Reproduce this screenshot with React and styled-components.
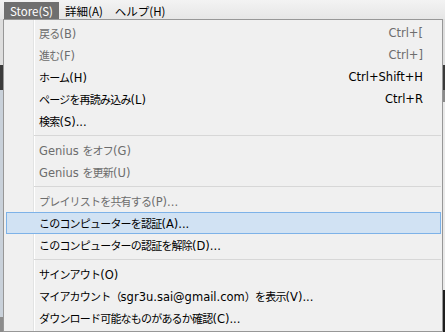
import React from "react";
import styled, { createGlobalStyle } from "styled-components";

const GlobalStyle = createGlobalStyle`
  html, body {
    margin: 0;
    padding: 0;
    overflow: hidden;
    background: #ececec;
  }
  body {
    font-family: "Noto Sans CJK JP", "Noto Sans", sans-serif;
  }
`;

const menuItems = [
  { label: "戻る(B)", shortcut: "Ctrl+[", disabled: true },
  { label: "進む(F)", shortcut: "Ctrl+]", disabled: true },
  { label: "ホーム(H)", shortcut: "Ctrl+Shift+H" },
  { label: "ページを再読み込み(L)", shortcut: "Ctrl+R" },
  { label: "検索(S)..." },
  { separator: true },
  { label: "Genius をオフ(G)", disabled: true },
  { label: "Genius を更新(U)", disabled: true },
  { separator: true },
  { label: "プレイリストを共有する(P)...", disabled: true },
  { label: "このコンピューターを認証(A)...", highlight: true },
  { label: "このコンピューターの認証を解除(D)..." },
  { separator: true },
  { label: "サインアウト(O)" },
  { label: "マイアカウント（sgr3u.sai@gmail.com）を表示(V)..." },
  { label: "ダウンロード可能なものがあるか確認(C)..." },
];

// latin runs get a wider face, kana/kanji a narrower one (like Meiryo UI)
function MixedText({ text }) {
  return text
    .split(/([\x20-\x7E]+)/)
    .filter(Boolean)
    .map((run, i) =>
      /^[\x20-\x7E]+$/.test(run) ? (
        <Latin key={i}>{run}</Latin>
      ) : (
        <Kana key={i}>{run}</Kana>
      )
    );
}

function App() {
  return (
    <Screen>
      <GlobalStyle />
      <MenuBar>
        <MenuTitle $active>Store(S)</MenuTitle>
        <MenuTitle>詳細(A)</MenuTitle>
        <MenuTitle>ヘルプ(H)</MenuTitle>
      </MenuBar>
      <Toolbar />
      <DarkBand />
      <Body>
        <SidePane>
          <SideList />
          <SideFooter />
        </SidePane>
        <MainPane>
          <MainList />
          <MainFooter />
        </MainPane>
      </Body>

      <Dropdown>
        {menuItems.map((item, i) =>
          item.separator ? (
            <Separator key={i} />
          ) : (
            <Item key={i} $disabled={item.disabled} $highlight={item.highlight}>
              <Label>
                <MixedText text={item.label} />
              </Label>
              {item.shortcut && <Latin>{item.shortcut}</Latin>}
            </Item>
          )
        )}
      </Dropdown>
    </Screen>
  );
}

export default App;

const Screen = styled.div`
  position: relative;
  width: 445px;
  height: 332px;
  display: flex;
  flex-direction: column;
  overflow: hidden;
`;

const MenuBar = styled.div`
  height: 19px;
  display: flex;
  align-items: center;
  padding-left: 4px;
  background: linear-gradient(#f3f3f3, #e6e6e6);
`;

const MenuTitle = styled.div`
  height: 17px;
  margin-top: 2px;
  display: flex;
  align-items: center;
  padding: 0 6px;
  font-size: 11.5px;
  color: ${(p) => (p.$active ? "#ffffff" : "#000000")};
  background: ${(p) => (p.$active ? "#6f6f6f" : "transparent")};
`;

const Toolbar = styled.div`
  height: 46px;
  background: #dedede;
`;

const DarkBand = styled.div`
  height: 25px;
  background: #3b3b3b;
`;

const Body = styled.div`
  flex: 1;
  display: flex;
`;

const SidePane = styled.div`
  width: 40px;
  display: flex;
  flex-direction: column;
`;

const SideList = styled.div`
  flex: 1;
  background: #c9d1da;
`;

const SideFooter = styled.div`
  height: 15px;
  background: #8c8c8c;
`;

const MainPane = styled.div`
  flex: 1;
  display: flex;
  flex-direction: column;
`;

const MainList = styled.div`
  flex: 1;
  background: linear-gradient(#8a8a8a 0 12px, #e9e9e9 12px);
`;

const MainFooter = styled.div`
  height: 42px;
  background: #1e1e1e;
`;

const Dropdown = styled.div`
  position: absolute;
  top: 19px;
  left: 3px;
  width: 440px;
  height: 313px;
  box-sizing: border-box;
  border: 1px solid #979797;
  padding: 2px 0;
  background-color: #f0f0f0;
  background-image: linear-gradient(
    to right,
    transparent 29px,
    #e2e3e3 29px,
    #e2e3e3 30px,
    #ffffff 30px,
    #ffffff 31px,
    transparent 31px
  );
`;

const Item = styled.div`
  height: 22px;
  box-sizing: border-box;
  margin: 0 1px 0 2px;
  padding: 0 17px 0 32px;
  display: flex;
  align-items: center;
  justify-content: space-between;
  white-space: pre;
  color: ${(p) => (p.$disabled ? "#6d6d6d" : "#000000")};
  border: 1px solid ${(p) => (p.$highlight ? "#7db2e8" : "transparent")};
  background: ${(p) => (p.$highlight ? "#d1e2f3" : "transparent")};
`;

const Label = styled.span`
  display: flex;
  align-items: baseline;
`;

const Latin = styled.span`
  font-family: "DejaVu Sans", "Noto Sans CJK JP", sans-serif;
  font-size: 11.5px;
  white-space: pre;
`;

const Kana = styled.span`
  font-family: "Noto Sans CJK JP", sans-serif;
  font-size: 11px;
  letter-spacing: -0.8px;
`;

const Separator = styled.div`
  height: 7px;
  display: flex;
  align-items: center;
  padding: 0 1px 0 30px;

  &::after {
    content: "";
    flex: 1;
    height: 1px;
    background: #d7d7d7;
  }
`;
